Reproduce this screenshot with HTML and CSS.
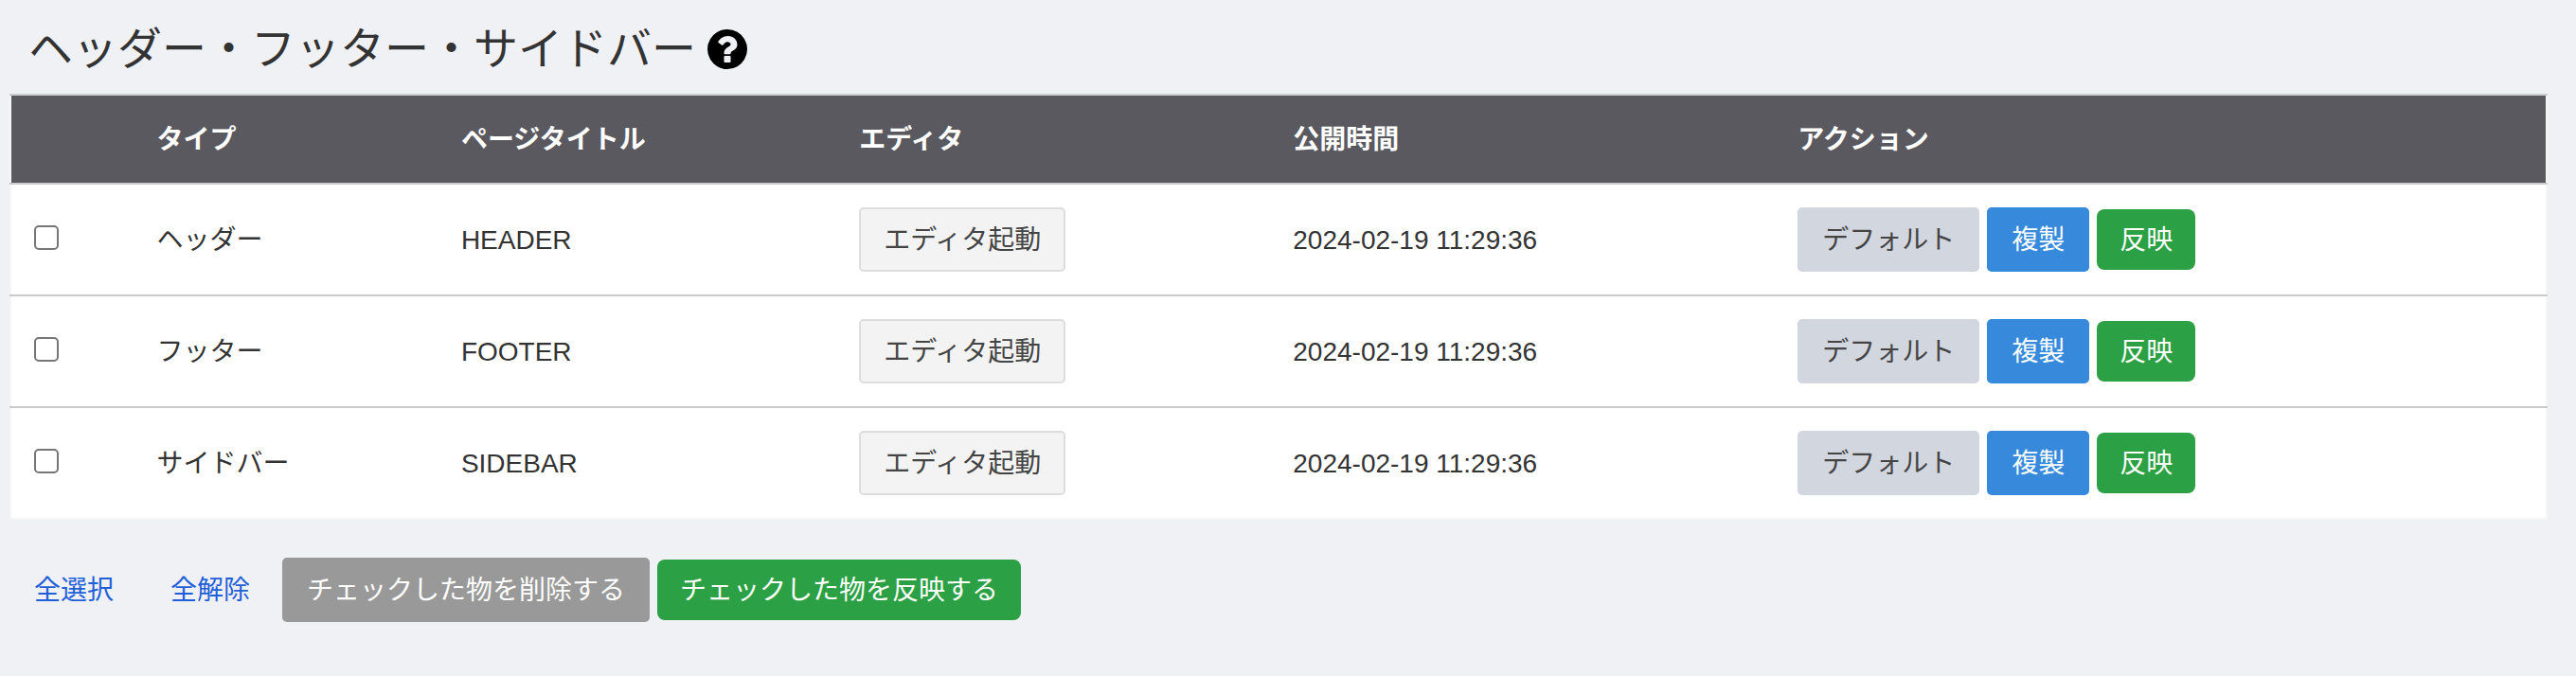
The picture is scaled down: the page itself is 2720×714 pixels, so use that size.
FILE: index.html
```html
<!DOCTYPE html>
<html lang="ja">
<head>
  <meta charset="UTF-8" />
  <meta name="viewport" content="width=device-width, initial-scale=1" />
  <title>ヘッダー・フッター・サイドバー</title>
  <link rel="stylesheet" href="styles.css">
</head>
<body>
  <div class="container">
    <div class="page-title">
      <h1>ヘッダー・フッター・サイドバー</h1>
      <a class="help" href="#" aria-label="ヘルプ">
        <svg class="help-icon" viewBox="128 128 1536 1536" aria-hidden="true">
          <path d="M1024 1376v-192q0-14-9-23t-23-9h-192q-14 0-23 9t-9 23v192q0 14 9 23t23 9h192q14 0 23-9t9-23zm256-672q0-88-55.500-163t-138.500-116-170-41q-243 0-371 213-15 24 8 42l132 100q7 6 19 6 16 0 25-12 53-68 86-92 34-24 86-24 48 0 85.500 26t37.500 59q0 38-20 61t-68 45q-63 28-115.500 86.500t-52.500 125.500v36q0 14 9 23t23 9h192q14 0 23-9t9-23q0-19 21.500-49.500t54.500-49.500q32-18 49-28.500t46-35 44.500-48 28-60.500 12.500-81zm384 192q0 209-103 385.500t-279.500 279.500-385.500 103-385.500-103-279.500-279.500-103-385.500 103-385.500 279.500-279.500 385.500-103 385.500 103 279.500 279.500 103 385.500z"/>
        </svg>
      </a>
    </div>

    <table class="parts-table">
      <colgroup>
        <col class="col-check">
        <col class="col-type">
        <col class="col-title">
        <col class="col-editor">
        <col class="col-date">
        <col class="col-action">
      </colgroup>
      <thead>
        <tr>
          <th></th>
          <th>タイプ</th>
          <th>ページタイトル</th>
          <th>エディタ</th>
          <th>公開時間</th>
          <th>アクション</th>
        </tr>
      </thead>
      <tbody>
        <tr>
          <td class="check-cell"><input type="checkbox" class="check" aria-label="ヘッダー"></td>
          <td>ヘッダー</td>
          <td>HEADER</td>
          <td><button type="button" class="btn btn-editor">エディタ起動</button></td>
          <td>2024-02-19 11:29:36</td>
          <td>
            <div class="actions">
              <button type="button" class="btn btn-default">デフォルト</button>
              <button type="button" class="btn btn-copy">複製</button>
              <button type="button" class="btn btn-apply">反映</button>
            </div>
          </td>
        </tr>
        <tr>
          <td class="check-cell"><input type="checkbox" class="check" aria-label="フッター"></td>
          <td>フッター</td>
          <td>FOOTER</td>
          <td><button type="button" class="btn btn-editor">エディタ起動</button></td>
          <td>2024-02-19 11:29:36</td>
          <td>
            <div class="actions">
              <button type="button" class="btn btn-default">デフォルト</button>
              <button type="button" class="btn btn-copy">複製</button>
              <button type="button" class="btn btn-apply">反映</button>
            </div>
          </td>
        </tr>
        <tr>
          <td class="check-cell"><input type="checkbox" class="check" aria-label="サイドバー"></td>
          <td>サイドバー</td>
          <td>SIDEBAR</td>
          <td><button type="button" class="btn btn-editor">エディタ起動</button></td>
          <td>2024-02-19 11:29:36</td>
          <td>
            <div class="actions">
              <button type="button" class="btn btn-default">デフォルト</button>
              <button type="button" class="btn btn-copy">複製</button>
              <button type="button" class="btn btn-apply">反映</button>
            </div>
          </td>
        </tr>
      </tbody>
    </table>

    <div class="actions bulk-actions">
      <a class="btn btn-link" href="#" data-check="on">全選択</a>
      <a class="btn btn-link" href="#" data-check="off">全解除</a>
      <button type="button" class="btn btn-delete">チェックした物を削除する</button>
      <button type="button" class="btn btn-apply">チェックした物を反映する</button>
    </div>
  </div>

  <script>
    // Select all / clear all links
    document.querySelectorAll('.btn-link').forEach(link => {
      link.addEventListener('click', e => {
        e.preventDefault();
        document.querySelectorAll('.check').forEach(box => {
          box.checked = link.dataset.check === 'on';
        });
      });
    });
  </script>
</body>
</html>
```
FILE: styles.css
```css
* {
  box-sizing: border-box;
}
body {
  margin: 0;
  background: #f0f1f5;
  color: #333;
  font-family: "Liberation Sans", "Noto Sans CJK JP", sans-serif;
  font-size: 28px;
  line-height: 40px;
}
.container {
  padding: 20px 30px 56px 10px;
}
/* Page heading with help icon */
.page-title {
  display: flex;
  align-items: center;
  gap: 12px;
  padding-left: 20px;
  margin-bottom: 15px;
}
.page-title h1 {
  margin: 0;
  font-size: 47px;
  font-weight: 400;
  line-height: 64px;
}
.help {
  display: flex;
  color: #000;
}
.help-icon {
  width: 42px;
  height: 42px;
  fill: currentColor;
}
/* Table of page parts */
.parts-table {
  width: 100%;
  table-layout: fixed;
  border-collapse: collapse;
  background: #fff;
  border: 2px solid #f5f5f6;
}
.col-check {
  width: 4.8%;
}
.col-type {
  width: 12%;
}
.col-title {
  width: 15.7%;
}
.col-editor {
  width: 17.1%;
}
.col-date {
  width: 19.9%;
}
.parts-table th,
.parts-table td {
  padding: 24px 26px;
  text-align: left;
  vertical-align: baseline;
}
.parts-table th {
  padding: 27px 26px 25px;
  background: #5a595f;
  color: #fff;
  font-weight: 700;
  border-top: 2px solid #cbcbcd;
}
.parts-table tbody tr {
  border-top: 2px solid #cbcbcd;
}
.parts-table .check-cell {
  padding-left: 24px;
  vertical-align: middle;
}
.check {
  appearance: none;
  display: block;
  width: 26px;
  height: 26px;
  margin: 0 0 4px;
  border: 2px solid #767676;
  border-radius: 5px;
  background: #fff;
}
.check:checked {
  background: #378adb;
}
/* Buttons */
.btn {
  display: block;
  padding: 13px 24px 11px;
  border: 2px solid transparent;
  border-radius: 5px;
  font: inherit;
  text-decoration: none;
  white-space: nowrap;
  cursor: pointer;
}
.btn-editor {
  background: #f3f3f3;
  border-color: #ddd;
  color: #444;
}
.btn-default {
  background: #d2d6df;
  color: #444;
}
.btn-copy {
  background: #378adb;
  color: #fff;
}
.btn-apply {
  border: 0;
  border-radius: 8px;
  background: #2ca044;
  color: #fff;
}
.btn-delete {
  background: #999;
  color: #fff;
}
.btn-link {
  color: #1f5fd8;
}
.actions {
  display: flex;
  align-items: center;
  gap: 8px;
}
.bulk-actions {
  margin-top: 40px;
}
```
